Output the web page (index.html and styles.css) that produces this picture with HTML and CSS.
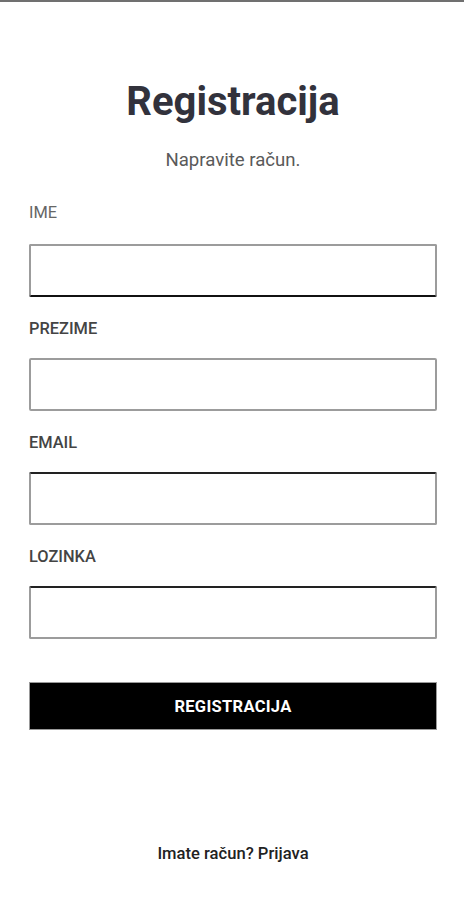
FILE: index.html
```html
<!DOCTYPE html>
<html lang="hr">
<head>
<meta charset="utf-8">
<title>Registracija</title>
<link rel="stylesheet" href="styles.css">
</head>
<body>
<div class="page">
  <h1 class="title">Registracija</h1>
  <p class="subtitle">Napravite račun.</p>
  <form class="form">
    <div class="field">
      <label class="label label-light">IME</label>
      <input class="input input-dark-bottom" type="text">
    </div>
    <div class="field">
      <label class="label">PREZIME</label>
      <input class="input" type="text">
    </div>
    <div class="field">
      <label class="label">EMAIL</label>
      <input class="input input-dark-top" type="text">
    </div>
    <div class="field">
      <label class="label">LOZINKA</label>
      <input class="input input-dark-top" type="password">
    </div>
    <button class="button" type="button">REGISTRACIJA</button>
  </form>
  <p class="footer">Imate račun? Prijava</p>
</div>
</body>
</html>
```
FILE: styles.css
```css
html, body {
  margin: 0;
  padding: 0;
  background: #ffffff;
}
body {
  font-family: Roboto, "Liberation Sans", sans-serif;
  color: #333;
}
.page {
  border-top: 2px solid #707070;
  height: 898px;
  padding: 0 27px 0 29px;
  display: flex;
  flex-direction: column;
  box-sizing: border-box;
}
.title {
  margin: 76px 0 0;
  font-size: 40px;
  line-height: 48px;
  font-weight: 700;
  text-align: center;
  color: #32323c;
}
.subtitle {
  margin: 22px 0 0;
  font-size: 18.6px;
  line-height: 24px;
  text-align: center;
  color: #5a5a5a;
}
.form {
  margin-top: 31px;
  display: flex;
  flex-direction: column;
}
.field {
  display: flex;
  flex-direction: column;
}
.label {
  font-size: 16.4px;
  line-height: 20px;
  font-weight: 500;
  color: #444;
  margin-bottom: 19px;
}
.label-light {
  font-weight: 400;
  color: #666;
  margin-bottom: 21px;
}
.input {
  height: 53px;
  box-sizing: border-box;
  border: 2px solid #9c9c9c;
  border-radius: 2px;
  margin: 0 0 22px;
  padding: 0 10px;
  background: #fff;
  font: inherit;
}
.input-dark-bottom {
  border-bottom-color: #111;
}
.input-dark-top {
  border-top-color: #222;
}
.button {
  margin-top: 21px;
  height: 48px;
  border: 1px solid #999;
  background: #000;
  color: #fff;
  font-family: Roboto, "Liberation Sans", sans-serif;
  font-size: 16.5px;
  font-weight: 700;
  letter-spacing: 0.3px;
  border-radius: 0;
}
.footer {
  margin: 114px 0 0;
  font-size: 16.6px;
  line-height: 20px;
  font-weight: 500;
  text-align: center;
  color: #222;
}
```
